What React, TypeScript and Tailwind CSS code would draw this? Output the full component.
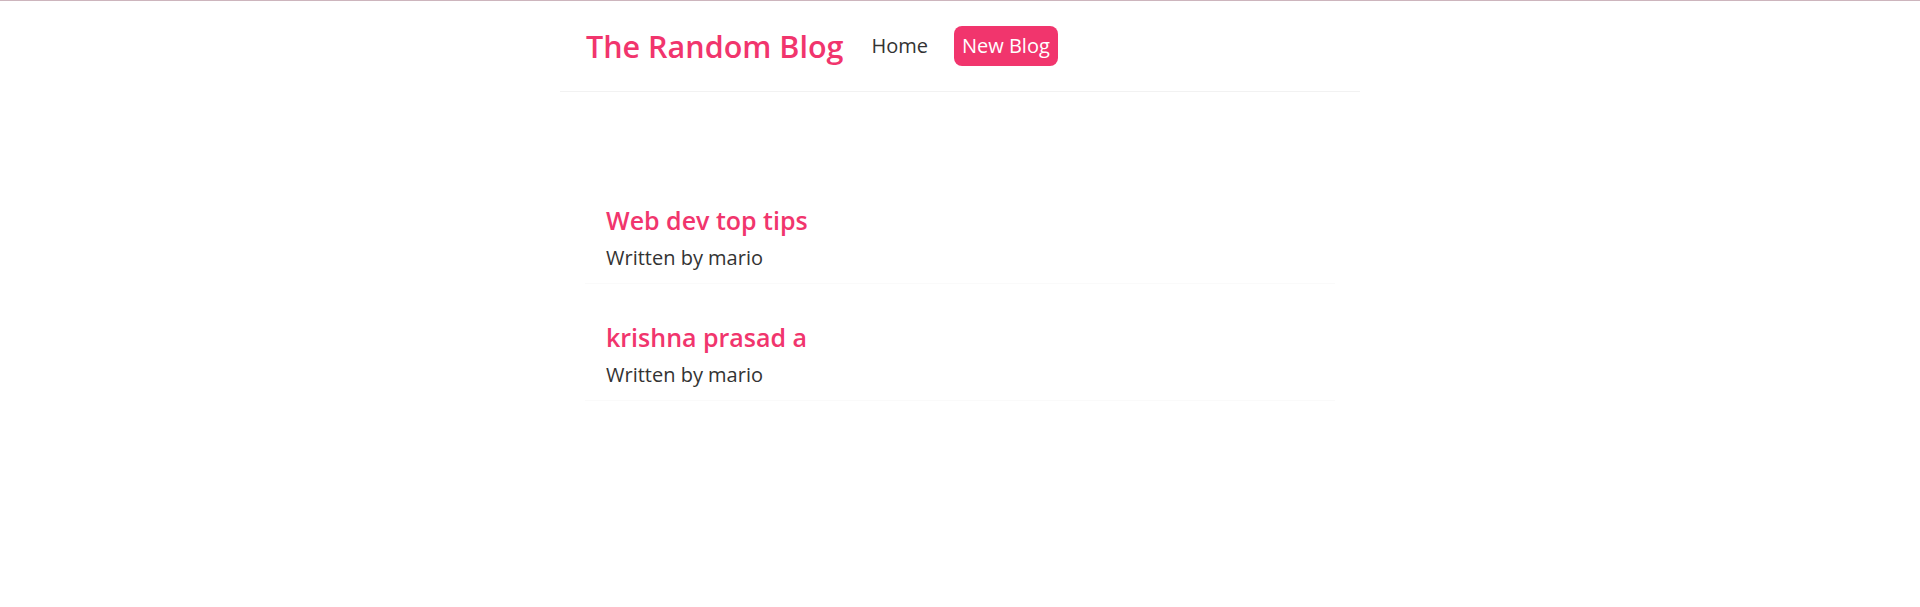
import React from 'react';

const blogs = [
  { id: 1, title: 'Web dev top tips', author: 'mario' },
  { id: 2, title: 'krishna prasad a', author: 'mario' },
];

const Navbar: React.FC = () => {
  return (
    <nav className="mx-auto flex h-[91px] w-[800px] items-center border-b border-[#f2f2f2] pl-[26px]">
      <h1 className="text-[30.5px] leading-[40px] font-semibold text-[#f1356d]">The Random Blog</h1>
      <div className="ml-[16px] flex items-center">
        <a href="/" className="ml-[6px] p-[6px] text-[20px] leading-[28px] text-[#333]">
          Home
        </a>
        <a
          href="/create"
          className="ml-[20px] rounded-[8px] bg-[#f1356d] px-[8px] py-[6px] text-[20px] leading-[28px] text-white"
        >
          New Blog
        </a>
      </div>
    </nav>
  );
};

const BlogList: React.FC = () => {
  return (
    <div className="mx-auto mt-[95px] w-[750px]">
      {blogs.map((blog) => (
        <div key={blog.id} className="mb-[20px] border-b border-[#fafafa] px-[21px] pt-[17px] pb-[11px]">
          <h2 className="mb-[8px] text-[25px] leading-[32px] font-semibold text-[#f1356d]">{blog.title}</h2>
          <p className="text-[20px] leading-[28px] text-[#333]">Written by {blog.author}</p>
        </div>
      ))}
    </div>
  );
};

export default function App() {
  return (
    <div className="min-h-[607px] border-t border-[#cdb5bd] bg-white font-['Open_Sans',sans-serif]">
      <Navbar />
      <BlogList />
    </div>
  );
}
